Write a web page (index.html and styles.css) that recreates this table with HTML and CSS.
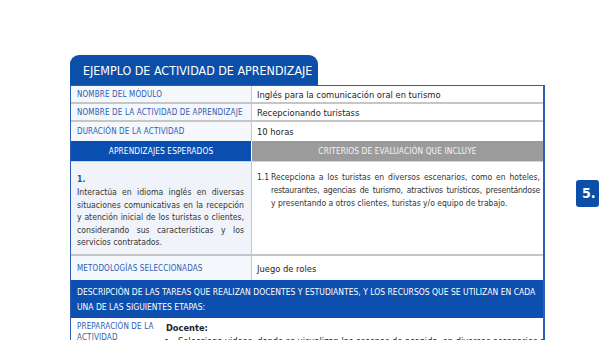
FILE: index.html
```html
<!DOCTYPE html>
<html lang="es">
<head>
<meta charset="utf-8">
<link rel="stylesheet" href="styles.css">
</head>
<body>
<div class="page">
  <div class="sheet">
    <div class="tab">EJEMPLO DE ACTIVIDAD DE APRENDIZAJE</div>
    <div class="table">
      <div class="row r1">
        <div class="label">NOMBRE DEL MÓDULO</div>
        <div class="value">Inglés para la comunicación oral en turismo</div>
      </div>
      <div class="row r1">
        <div class="label">NOMBRE DE LA ACTIVIDAD DE APRENDIZAJE</div>
        <div class="value">Recepcionando turistass</div>
      </div>
      <div class="row r2">
        <div class="label">DURACIÓN DE LA ACTIVIDAD</div>
        <div class="value">10 horas</div>
      </div>
      <div class="row head">
        <div class="hblue">APRENDIZAJES ESPERADOS</div>
        <div class="hgray">CRITERIOS DE EVALUACIÓN QUE INCLUYE</div>
      </div>
      <div class="row content">
        <div class="learn">
          <div class="num">1.</div>
          <p>Interactúa en idioma inglés en diversas situaciones comunicativas en la recepción y atención inicial de los turistas o clientes, considerando sus características y los servicios contratados.</p>
        </div>
        <div class="crit">
          <span class="cnum">1.1</span>
          <p><span class="jl">Recepciona a los turistas en diversos escenarios, como en hoteles,</span> <span class="jl tight">restaurantes, agencias de turismo, atractivos turísticos, presentándose</span> <span class="ll">y presentando a otros clientes, turistas y/o equipo de trabajo.</span></p>
        </div>
      </div>
      <div class="row r3">
        <div class="label">METODOLOGÍAS SELECCIONADAS</div>
        <div class="value">Juego de roles</div>
      </div>
      <div class="desc">DESCRIPCIÓN DE LAS TAREAS QUE REALIZAN DOCENTES Y ESTUDIANTES, Y LOS RECURSOS QUE SE UTILIZAN EN CADA UNA DE LAS SIGUIENTES ETAPAS:</div>
      <div class="prep">
        <div class="plabel">PREPARACIÓN DE LA ACTIVIDAD</div>
        <div class="pvalue">
          <div class="bold">Docente:</div>
          <ul><li>Selecciona videos, donde se visualizan las escenas de acogida, en diversos escenarios de la</li></ul>
        </div>
      </div>
    </div>
  </div>
  <div class="badge">5.</div>
</div>
</body>
</html>
```
FILE: styles.css
```css
* { box-sizing: border-box; }
html, body { margin: 0; padding: 0; background: #fff; }
body {
  font-family: "DejaVu Sans Condensed", "DejaVu Sans", sans-serif;
  font-stretch: semi-condensed;
  width: 600px;
  height: 340px;
  overflow: hidden;
}
.page { position: relative; width: 600px; height: 340px; padding: 55px 0 0 70px; overflow: hidden; }
.sheet { width: 475px; }
.tab {
  width: 248px;
  height: 30px;
  background: #0c4fa9;
  color: #fff;
  border-radius: 9px 9px 0 0;
  font-size: 12.4px;
  line-height: 32px;
  padding-left: 13px;
  white-space: nowrap;
}
.table {
  border-left: 1px solid #2c5fb4;
  border-right: 2px solid #2c5fb4;
  border-top: 1px solid #2c5fb4;
}
.row {
  display: grid;
  grid-template-columns: 181px 1fr;
  border-bottom: 2px solid #c6c6c6;
}
.label {
  background: #f4f7fc;
  color: #2e5db0;
  font-size: 8px;
  letter-spacing: 0.15px;
  padding: 0 6px;
  border-right: 1px solid #c6c6c6;
  display: flex;
  align-items: center;
  white-space: nowrap;
}
.value {
  color: #222;
  font-size: 9.3px;
  padding: 0 5px;
  display: flex;
  align-items: center;
  overflow: hidden;
}
.r1 { height: 18px; }
.r2 { height: 19px; border-bottom: none; }
.r3 { height: 24px; border-bottom: none; }
.head { height: 20px; border-bottom: none; }
.hblue, .hgray {
  font-size: 8.3px;
  letter-spacing: 0.1px;
  text-align: center;
  line-height: 20px;
}
.hblue {
  background: #0a4fb0;
  color: #fff;
  border-right: 1px solid #fff;
}
.hgray {
  background: #9b9b9b;
  color: #f4f4f4;
}
.content { height: 95px; border-top: 1px solid #d0d4dc; border-bottom: 2px solid #c6c6c6; }
.learn {
  background: #f0f4fa;
  border-right: 1px solid #c6c6c6;
  padding: 11px 7px 0 6px;
  color: #333;
  font-size: 8.6px;
}
.num { color: #1f4fa8; font-weight: bold; line-height: 13px; }
.learn p { margin: 0; line-height: 12.6px; text-align: justify; }
.crit {
  display: flex;
  padding: 9px 3px 0 5px;
  color: #333;
  font-size: 8.5px;
  line-height: 13px;
}
.cnum { flex: 0 0 14px; }
.crit p { margin: 0; flex: 1; min-width: 0; }
.crit .jl { display: block; white-space: nowrap; text-align: justify; text-align-last: justify; }
.crit .tight { letter-spacing: -0.2px; }
.crit .ll { display: block; }
.desc {
  background: #0c4fae;
  color: #fff;
  font-size: 8.5px;
  line-height: 15px;
  padding: 5px 6px 4px 6px;
  height: 38px;
}
.prep {
  display: grid;
  grid-template-columns: 90px 1fr;
  height: 40px;
}
.plabel {
  color: #2e5db0;
  font-size: 8px;
  letter-spacing: 0.15px;
  padding: 3px 0 0 6px;
  line-height: 11px;
}
.pvalue {
  color: #222;
  font-size: 9.2px;
  padding: 4px 4px 0 5px;
  overflow: hidden;
}
.bold { font-weight: bold; line-height: 12px; }
.pvalue ul { margin: 0; padding-left: 12px; line-height: 14px; white-space: nowrap; }
.badge {
  position: absolute;
  left: 576px;
  top: 180px;
  width: 23px;
  height: 27px;
  background: #0c4fa9;
  color: #fff;
  border-radius: 3px;
  font-weight: bold;
  font-size: 14px;
  line-height: 27px;
  padding-left: 6px;
}
```
